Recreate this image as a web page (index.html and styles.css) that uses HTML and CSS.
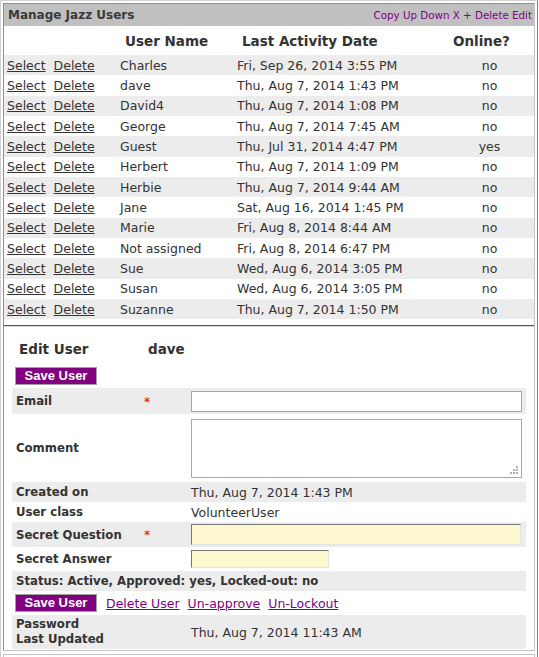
FILE: index.html
```html
<!DOCTYPE html>
<html>
<head>
<meta charset="utf-8">
<title>Manage Jazz Users</title>
<link rel="stylesheet" href="styles.css">
</head>
<body>
<div class="frame">
  <div class="cell main">
    <div class="titlebar">
      <span class="title">Manage Jazz Users</span>
      <span class="tools">Copy Up Down X + Delete Edit</span>
    </div>
    <table class="grid">
      <colgroup><col class="w-act"><col class="w-name"><col class="w-date"><col class="w-on"></colgroup>
      <thead>
        <tr><th></th><th>User Name</th><th>Last Activity Date</th><th>Online?</th></tr>
      </thead>
      <tbody>
        <tr class="alt"><td><span class="acts"><a href="#">Select</a><a href="#">Delete</a></span></td><td>Charles</td><td>Fri, Sep 26, 2014 3:55 PM</td><td class="c-on">no</td></tr>
        <tr><td><span class="acts"><a href="#">Select</a><a href="#">Delete</a></span></td><td>dave</td><td>Thu, Aug 7, 2014 1:43 PM</td><td class="c-on">no</td></tr>
        <tr class="alt"><td><span class="acts"><a href="#">Select</a><a href="#">Delete</a></span></td><td>David4</td><td>Thu, Aug 7, 2014 1:08 PM</td><td class="c-on">no</td></tr>
        <tr><td><span class="acts"><a href="#">Select</a><a href="#">Delete</a></span></td><td>George</td><td>Thu, Aug 7, 2014 7:45 AM</td><td class="c-on">no</td></tr>
        <tr class="alt"><td><span class="acts"><a href="#">Select</a><a href="#">Delete</a></span></td><td>Guest</td><td>Thu, Jul 31, 2014 4:47 PM</td><td class="c-on">yes</td></tr>
        <tr><td><span class="acts"><a href="#">Select</a><a href="#">Delete</a></span></td><td>Herbert</td><td>Thu, Aug 7, 2014 1:09 PM</td><td class="c-on">no</td></tr>
        <tr class="alt"><td><span class="acts"><a href="#">Select</a><a href="#">Delete</a></span></td><td>Herbie</td><td>Thu, Aug 7, 2014 9:44 AM</td><td class="c-on">no</td></tr>
        <tr><td><span class="acts"><a href="#">Select</a><a href="#">Delete</a></span></td><td>Jane</td><td>Sat, Aug 16, 2014 1:45 PM</td><td class="c-on">no</td></tr>
        <tr class="alt"><td><span class="acts"><a href="#">Select</a><a href="#">Delete</a></span></td><td>Marie</td><td>Fri, Aug 8, 2014 8:44 AM</td><td class="c-on">no</td></tr>
        <tr><td><span class="acts"><a href="#">Select</a><a href="#">Delete</a></span></td><td>Not assigned</td><td>Fri, Aug 8, 2014 6:47 PM</td><td class="c-on">no</td></tr>
        <tr class="alt"><td><span class="acts"><a href="#">Select</a><a href="#">Delete</a></span></td><td>Sue</td><td>Wed, Aug 6, 2014 3:05 PM</td><td class="c-on">no</td></tr>
        <tr><td><span class="acts"><a href="#">Select</a><a href="#">Delete</a></span></td><td>Susan</td><td>Wed, Aug 6, 2014 3:05 PM</td><td class="c-on">no</td></tr>
        <tr class="alt"><td><span class="acts"><a href="#">Select</a><a href="#">Delete</a></span></td><td>Suzanne</td><td>Thu, Aug 7, 2014 1:50 PM</td><td class="c-on">no</td></tr>
      </tbody>
    </table>
    <div class="sep"></div>
    <div class="edit-head"><span class="edit-label">Edit User</span><span>dave</span></div>
    <button class="btn top-btn" type="button">Save User</button>
    <table class="form">
      <colgroup><col class="w-label"><col class="w-req"><col class="w-val"></colgroup>
      <tr class="alt r-email"><th>Email</th><td class="req">*</td><td class="val"><input class="txt email" type="text"></td></tr>
      <tr class="r-comment"><th>Comment</th><td class="req"></td><td class="val"><span class="ta-wrap"><textarea class="txt comment"></textarea><svg class="grip" width="9" height="9" viewBox="0 0 9 9"><rect x="6" y="0" width="2" height="2" fill="#b0b0b0"/><rect x="3" y="3" width="2" height="2" fill="#b0b0b0"/><rect x="6" y="3" width="2" height="2" fill="#b0b0b0"/><rect x="0" y="6" width="2" height="2" fill="#b0b0b0"/><rect x="3" y="6" width="2" height="2" fill="#b0b0b0"/><rect x="6" y="6" width="2" height="2" fill="#b0b0b0"/></svg></span></td></tr>
      <tr class="alt r-20"><th>Created on</th><td class="req"></td><td class="val">Thu, Aug 7, 2014 1:43 PM</td></tr>
      <tr class="r-20"><th>User class</th><td class="req"></td><td class="val">VolunteerUser</td></tr>
      <tr class="alt r-sq"><th>Secret Question</th><td class="req">*</td><td class="val"><input class="txt yellow question" type="text"></td></tr>
      <tr class="r-sa"><th>Secret Answer</th><td class="req"></td><td class="val"><input class="txt yellow answer" type="text"></td></tr>
      <tr class="alt r-20"><th colspan="3">Status: Active, Approved: yes, Locked-out: no</th></tr>
      <tr class="r-act"><td colspan="3" class="actions"><button class="btn" type="button">Save User</button><a href="#">Delete User</a><a href="#">Un-approve</a><a href="#">Un-Lockout</a></td></tr>
      <tr class="alt r-pw"><th class="two">Password<br>Last Updated</th><td class="req"></td><td class="val">Thu, Aug 7, 2014 11:43 AM</td></tr>
    </table>
  </div>
  <div class="cell next"></div>
</div>
</body>
</html>
```
FILE: styles.css
```css
body {
  margin: 0;
  background: #fff;
  color: #333;
  font-family: "DejaVu Sans", Verdana, sans-serif;
  font-size: 12.5px;
}

.frame {
  width: 532px;
  border: 1px solid;
  border-color: #d0d0d0 #808080 #808080 #d0d0d0;
  padding: 2px;
  display: flex;
  flex-direction: column;
  gap: 3px;
}

.cell {
  border: 1px solid;
  border-color: #909090 #c4c4c4 #c4c4c4 #909090;
}

.main {
  height: 646px;
  overflow: hidden;
}

.next {
  height: 20px;
  border-color: #c4c4c4;
}

.titlebar {
  height: 22px;
  background: #c0c0c0;
  display: flex;
  align-items: center;
  justify-content: space-between;
  padding: 0 2px 0 4px;
}

.title {
  font-weight: bold;
  font-size: 12px;
  color: #3a3a3a;
}

.tools {
  font-size: 10.3px;
  color: #800080;
}

.grid {
  width: 530px;
  border-collapse: collapse;
  table-layout: fixed;
}

.w-act { width: 113px; }
.w-name { width: 117px; }
.w-date { width: 211px; }
.w-on { width: 89px; }

.grid th {
  height: 29px;
  padding: 0 0 0 8px;
  text-align: left;
  font-size: 13.5px;
  font-weight: bold;
  color: #333;
}

.grid td {
  height: 20.33px;
  padding: 0 0 0 3px;
  white-space: nowrap;
}

.grid .c-on {
  text-align: center;
  padding: 0;
}

.alt {
  background: #ececec;
}

.acts {
  display: inline-flex;
  gap: 8px;
}

.acts a {
  color: #333;
  text-decoration: underline;
}

.sep {
  margin-top: 6px;
  border-top: 1px solid #555;
  border-bottom: 1px solid #d8d8d8;
}

.edit-head {
  display: flex;
  padding: 14px 0 0 15px;
  font-weight: bold;
  font-size: 13.5px;
  line-height: 16px;
}

.edit-label {
  width: 129px;
}

.btn {
  box-sizing: border-box;
  width: 82px;
  height: 18px;
  padding: 0;
  background: #800080;
  color: #fff;
  border: 1px solid #a0a0a0;
  font-family: "Liberation Sans", Arial, sans-serif;
  font-weight: bold;
  font-size: 13px;
  line-height: 14px;
}

.top-btn {
  display: block;
  margin: 10px 0 0 11px;
}

.form {
  width: 514px;
  margin: 3px 0 0 8px;
  border-collapse: collapse;
  table-layout: fixed;
}

.w-label { width: 128px; }
.w-req { width: 48px; }
.w-val { width: 338px; }

.form th {
  padding: 0 0 0 4px;
  text-align: left;
  font-size: 11.7px;
  font-weight: bold;
  color: #333;
  white-space: nowrap;
}

.form td {
  padding: 0;
}

.form .val {
  padding-left: 3px;
  white-space: nowrap;
}

.form .req {
  color: #e00000;
  padding-left: 4px;
}

.two {
  line-height: 15px;
}

.r-email { height: 26px; }
.r-comment { height: 68px; }
.r-20 { height: 20px; }
.r-sq { height: 25px; }
.r-sa { height: 24px; }
.r-act { height: 24px; }
.r-pw { height: 34px; }

.txt {
  box-sizing: border-box;
  display: block;
  margin: 0;
  padding: 0 2px;
  border: 1px solid #a8a8a8;
  background: #fff;
  font-family: inherit;
  font-size: 12.5px;
}

.email { width: 331px; height: 21px; }
.comment { width: 331px; height: 59px; resize: none; }

.ta-wrap {
  position: relative;
  display: block;
  width: 331px;
}

.grip {
  position: absolute;
  right: 3px;
  bottom: 3px;
}

.yellow {
  background: #fdf8cf;
  border-color: #777 #e4e4e4 #e4e4e4 #777;
}

.question { width: 330px; height: 21px; }
.answer { width: 138px; height: 18px; }

.actions {
  padding-left: 3px !important;
}

.actions .btn {
  margin-right: 9px;
  vertical-align: middle;
}

.actions a {
  color: #800080;
  text-decoration: underline;
  margin-right: 8px;
  vertical-align: middle;
}
```
